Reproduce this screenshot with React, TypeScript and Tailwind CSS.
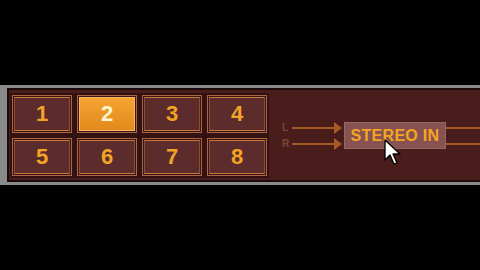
import React from "react";

const nums = [1, 2, 3, 4, 5, 6, 7, 8];

function Cell({ n }: { n: number }) {
  const active = n === 2;
  return (
    <div className="h-[38px] border border-[#a86848] bg-[#3a1414] p-[1px]">
      <div
        className={
          active
            ? "flex h-full items-center justify-center border border-[#f6b860] bg-gradient-to-b from-[#f4a432] to-[#e28a1a] text-[#fff3d0]"
            : "flex h-full items-center justify-center border border-x-[#8e4c32] border-y-[#c87836] bg-[#5c2b2b] text-[#f2a426]"
        }
      >
        <span className="text-[22px] font-bold leading-none">{n}</span>
      </div>
    </div>
  );
}

function Lane({ label }: { label: string }) {
  return (
    <div className="flex h-[14px] items-center">
      <span className="w-[10px] text-[10px] font-bold leading-none text-[#7e4630]">{label}</span>
      <div className="h-[2px] w-[43px] bg-[#a45a22]" />
      <svg width="8" height="12" viewBox="0 0 8 12" className="-ml-[1px]">
        <path d="M0 0 L8 6 L0 12 Z" fill="#a45a22" />
      </svg>
    </div>
  );
}

export default function App() {
  return (
    <div
      className="relative h-[270px] w-[480px] overflow-hidden bg-black pt-[85px]"
      style={{ fontFamily: '"Liberation Sans", Arial, sans-serif' }}
    >
      <div className="h-[100px] border-b-[3px] border-l-[7px] border-t-[3px] border-[#8a8a8a]">
        <div className="flex h-full border-2 border-r-0 border-[#1c0a0a] bg-[#4a1d1d] pl-[1px] pt-[3px]">
          <div className="grid h-[85px] w-[259px] grid-cols-4 gap-x-[5px] gap-y-[5px] bg-[#351212] p-[2px]">
            {nums.map((n) => (
              <Cell key={n} n={n} />
            ))}
          </div>
          <div className="flex h-[85px] flex-1 items-center pl-[13px]">
            <div className="flex flex-col gap-[2px]">
              <Lane label="L" />
              <Lane label="R" />
            </div>
            <div className="ml-[2px] flex h-[27px] w-[102px] items-center justify-center border border-[#9a6464] bg-[#875252]">
              <span className="text-[16px] font-bold leading-none tracking-[0.3px] text-[#f4a620]">STEREO IN</span>
            </div>
            <div className="flex flex-1 flex-col gap-[14px]">
              <div className="h-[2px] bg-[#a45a22]" />
              <div className="h-[2px] bg-[#a45a22]" />
            </div>
          </div>
        </div>
      </div>
      <svg className="absolute left-[384px] top-[139px]" width="20" height="28" viewBox="0 0 20 28">
        <path d="M1 1 L1 21 L6 16 L10 25 L13 24 L9 15 L16 15 Z" fill="#ffffff" stroke="#000000" strokeWidth="1.3" strokeLinejoin="round" />
      </svg>
    </div>
  );
}
